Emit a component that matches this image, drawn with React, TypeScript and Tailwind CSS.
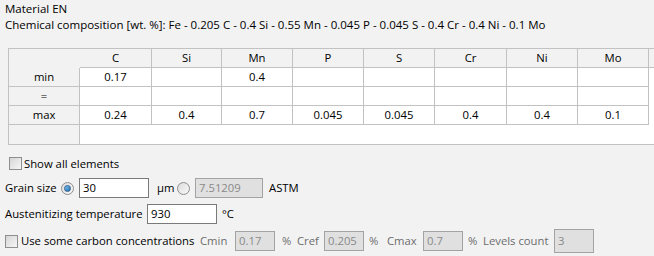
import React from 'react'

const elements = [
  { name: 'C', w: 'w-[72px]', min: '0.17', max: '0.24' },
  { name: 'Si', w: 'w-[70px]', min: '', max: '0.4' },
  { name: 'Mn', w: 'w-[71px]', min: '0.4', max: '0.7' },
  { name: 'P', w: 'w-[71px]', min: '', max: '0.045' },
  { name: 'S', w: 'w-[71px]', min: '', max: '0.045' },
  { name: 'Cr', w: 'w-[72px]', min: '', max: '0.4' },
  { name: 'Ni', w: 'w-[71px]', min: '', max: '0.4' },
  { name: 'Mo', w: 'w-[71px]', min: '', max: '0.1' },
]

const Checkbox = () => (
  <span className="inline-block w-[13px] h-[13px] border border-[#8f8f8f] bg-gradient-to-br from-[#d6d6d6] to-[#f6f6f6] shrink-0" />
)

const Radio = ({ checked }: { checked?: boolean }) => (
  <span className="inline-flex items-center justify-center w-[13px] h-[13px] rounded-full border border-[#8e8e8e] bg-gradient-to-br from-[#dcdcdc] to-[#f8f8f8] shrink-0">
    {checked && <span className="w-[7px] h-[7px] rounded-full bg-gradient-to-br from-[#7ec2ef] to-[#1f6fb3] border border-[#2c5e8c]" />}
  </span>
)

const TextBox = ({ value, w, disabled, h = 'h-[20px]' }: { value: string; w: string; disabled?: boolean; h?: string }) => (
  <span
    className={
      'inline-flex items-center pl-[3px] border shrink-0 ' +
      w +
      ' ' +
      h +
      (disabled ? ' bg-[#e0e0e0] border-[#a3a3a3] text-[#8a8a8a]' : ' bg-white border-[#7a7a7a] text-black')
    }
  >
    {value}
  </span>
)

const Row = ({ label, values }: { label: string; values: string[] }) => (
  <div className="flex h-[19px]">
    <div className="w-[71px] flex items-center justify-center border-r border-b border-[#c2c2c2] bg-[#f2f2f2]">{label}</div>
    {elements.map((el, i) => (
      <div key={el.name} className={el.w + ' flex items-center justify-center border-r border-b border-[#c2c2c2] bg-white'}>
        {values[i]}
      </div>
    ))}
    <div className="flex-1 bg-white" />
  </div>
)

export default function App() {
  return (
    <div className="w-[654px] h-[256px] overflow-hidden bg-[#f2f2f2] text-black text-[11.3px] leading-[16px] font-['Open_Sans',sans-serif]">
      <div className="pl-[5px] pt-[1px] text-[11.5px]">
        <div>Material EN</div>
        <div>
          Chemical composition [wt. %]: Fe - 0.205 C - 0.4 Si - 0.55 Mn - 0.045 P - 0.045 S - 0.4 Cr - 0.4 Ni - 0.1 Mo
        </div>
      </div>

      <div className="ml-[8px] mt-[15px] w-[646px] border-l border-t border-b border-[#c2c2c2] flex flex-col">
        <div className="flex h-[19px]">
          <div className="w-[71px] bg-[#f2f2f2]" />
          {elements.map((el) => (
            <div key={el.name} className={el.w + ' flex items-center justify-center border-r border-b border-[#c2c2c2]'}>
              {el.name}
            </div>
          ))}
          <div className="flex-1 border-b border-[#c2c2c2]" />
        </div>
        <Row label="min" values={elements.map((e) => e.min)} />
        <Row label="=" values={elements.map(() => '')} />
        <Row label="max" values={elements.map((e) => e.max)} />
        <div className="flex h-[19px]">
          <div className="w-[71px] border-r border-[#c2c2c2] bg-[#f2f2f2]" />
          <div className="flex-1 bg-white" />
        </div>
      </div>

      <div className="flex items-center h-[13px] mt-[12px] pl-[9px] gap-[2px]">
        <Checkbox />
        <span>Show all elements</span>
      </div>

      <div className="flex items-center h-[20px] mt-[8px] pl-[5px]">
        <span className="w-[56px]">Grain size</span>
        <Radio checked />
        <span className="w-[5px]" />
        <TextBox value="30" w="w-[70px]" />
        <span className="w-[28px] pl-[8px]">µm</span>
        <Radio />
        <span className="w-[5px]" />
        <TextBox value="7.51209" w="w-[68px]" disabled />
        <span className="pl-[6px]">ASTM</span>
      </div>

      <div className="flex items-center h-[20px] mt-[6px] pl-[5px]">
        <span className="w-[142px]">Austenitizing temperature</span>
        <TextBox value="930" w="w-[70px]" />
        <span className="pl-[5px]">°C</span>
      </div>

      <div className="flex items-center h-[24px] mt-[5px] pl-[5px] text-[#6d6d6d]">
        <Checkbox />
        <span className="w-[182px] pl-[3px] text-black">Use some carbon concentrations</span>
        <span className="w-[35px]">Cmin</span>
        <TextBox value="0.17" w="w-[40px]" disabled />
        <span className="w-[22px] pl-[7px]">%</span>
        <span className="w-[27px]">Cref</span>
        <TextBox value="0.205" w="w-[40px]" disabled />
        <span className="w-[23px] pl-[5px]">%</span>
        <span className="w-[36px]">Cmax</span>
        <TextBox value="0.7" w="w-[40px]" disabled />
        <span className="w-[20px] pl-[5px]">%</span>
        <span className="w-[71px]">Levels count</span>
        <TextBox value="3" w="w-[40px]" h="h-[24px]" disabled />
      </div>
    </div>
  )
}
